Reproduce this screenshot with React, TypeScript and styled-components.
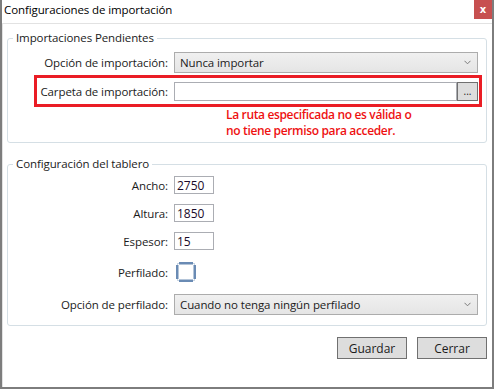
import React from 'react';
import styled, { createGlobalStyle } from 'styled-components';

const GlobalStyle = createGlobalStyle`
  html, body {
    margin: 0;
    padding: 0;
    background: #ffffff;
  }
  body {
    font-family: "Open Sans", "Noto Sans", sans-serif;
    font-size: 11.5px;
    letter-spacing: -0.1px;
    color: #1b1b1b;
  }
`;

const Window = styled.div`
  width: 494px;
  height: 389px;
  box-sizing: border-box;
  border: 2px solid #7d7d7d;
  border-top: none;
  display: flex;
  flex-direction: column;
  background: #ffffff;
`;

const TitleBar = styled.div`
  height: 23px;
  display: flex;
  justify-content: space-between;
  align-items: flex-start;
  padding-left: 2px;
`;

const Title = styled.span`
  line-height: 20px;
  color: #000000;
`;

const CloseButton = styled.div`
  width: 18px;
  height: 19px;
  background: #c75050;
  color: #ffffff;
  display: flex;
  align-items: center;
  justify-content: center;
  font: bold 10px "DejaVu Sans", sans-serif;
`;

const Content = styled.div`
  flex: 1;
  border-top: 1px solid #e2e2e2;
  border-left: 1px solid #e2e2e2;
  padding: 6px 5px 0 4px;
  display: flex;
  flex-direction: column;
`;

const GroupBox = styled.fieldset<{ $top: number; $padTop: number; $padBottom: number }>`
  margin: ${(p) => p.$top}px 0 0;
  padding: ${(p) => p.$padTop}px 8px ${(p) => p.$padBottom}px 0;
  border: 1px solid #d5dfe5;
  border-radius: 3px;
  min-width: 0;
`;

const Legend = styled.legend`
  margin-left: 5px;
  padding: 0 3px;
  line-height: 16px;
  color: #1b1b1b;
`;

const FormRow = styled.div<{ $labelWidth?: number; $top?: number }>`
  display: grid;
  grid-template-columns: ${(p) => p.$labelWidth ?? 160}px 1fr;
  column-gap: 6px;
  align-items: center;
  margin-top: ${(p) => p.$top ?? 0}px;
`;

const Label = styled.label`
  text-align: right;
  white-space: nowrap;
  color: #1b1b1b;
`;

const Highlight = styled.div`
  margin: 2px -4px 0 26px;
  border: 3px solid #ea1d25;
  padding: 4px 1px 3px 0;
`;

const SelectBox = styled.div`
  height: 21px;
  box-sizing: border-box;
  border: 1px solid #acacac;
  background: linear-gradient(#f0f0f0, #e5e5e5);
  display: flex;
  align-items: center;
  justify-content: space-between;
  padding: 0 6px 0 5px;
  color: #1b1b1b;
`;

const PathField = styled.div`
  display: flex;
  height: 19px;
`;

const TextBox = styled.input<{ $width?: number }>`
  box-sizing: border-box;
  width: ${(p) => (p.$width ? `${p.$width}px` : 'auto')};
  flex: ${(p) => (p.$width ? 'none' : '1')};
  min-width: 0;
  height: ${(p) => (p.$width ? 18 : 19)}px;
  border: 1px solid #abadb3;
  padding: 0 2px;
  margin: 0;
  font: inherit;
  font-size: 12px;
  color: #1a0a2a;
  background: #ffffff;
  outline: none;
`;

const BrowseButton = styled.button`
  width: 21px;
  height: 19px;
  box-sizing: border-box;
  border: 1px solid #707070;
  background: #dddddd;
  padding: 0 0 4px;
  margin: 0;
  font: inherit;
  font-size: 10px;
  line-height: 10px;
  color: #1b1b1b;
  display: flex;
  align-items: flex-end;
  justify-content: center;
`;

const ErrorText = styled.div`
  grid-column: 2;
  margin-left: 52px;
  font-size: 12px;
  line-height: 16px;
  letter-spacing: -0.35px;
  color: #ee1111;
  font-weight: 600;
`;

const CheckMark = styled.svg`
  display: block;
  margin-left: 2px;
`;

const ButtonBar = styled.div`
  display: flex;
  justify-content: flex-end;
  gap: 10px;
  margin: 11px 0 0;
`;

const DialogButton = styled.button`
  width: 70px;
  height: 22px;
  box-sizing: border-box;
  border: 1px solid #707070;
  background: #dddddd;
  font: inherit;
  font-size: 12px;
  color: #1b1b1b;
  padding: 0;
`;

function Chevron(): JSX.Element {
  return (
    <svg width="7" height="5" viewBox="0 0 7 5">
      <path d="M0.5 0.8 L3.5 3.8 L6.5 0.8" fill="none" stroke="#7a7a7a" strokeWidth="1" />
    </svg>
  );
}

function ComboBox({ text }: { text: string }): JSX.Element {
  return (
    <SelectBox>
      <span>{text}</span>
      <Chevron />
    </SelectBox>
  );
}

function Checkbox(): JSX.Element {
  return (
    <CheckMark width="20" height="20" viewBox="0 0 20 20">
      <rect x="1.5" y="1.5" width="17" height="17" fill="#ffffff" stroke="#c9d6e4" strokeWidth="1" />
      <rect x="3" y="0" width="14" height="2.5" fill="#6a8bb4" />
      <rect x="3" y="17.5" width="14" height="2.5" fill="#6a8bb4" />
      <rect x="0" y="3" width="2.5" height="14" fill="#6a8bb4" />
      <rect x="17.5" y="3" width="2.5" height="14" fill="#6a8bb4" />
    </CheckMark>
  );
}

export default function App(): JSX.Element {
  return (
    <>
      <GlobalStyle />
      <Window>
        <TitleBar>
          <Title>Configuraciones de importación</Title>
          <CloseButton>x</CloseButton>
        </TitleBar>
        <Content>
          <GroupBox $top={0} $padTop={6} $padBottom={3}>
            <Legend>Importaciones Pendientes</Legend>
            <FormRow>
              <Label>Opción de importación:</Label>
              <ComboBox text="Nunca importar" />
            </FormRow>
            <Highlight>
              <FormRow $labelWidth={131}>
                <Label>Carpeta de importación:</Label>
                <PathField>
                  <TextBox defaultValue="" />
                  <BrowseButton>...</BrowseButton>
                </PathField>
              </FormRow>
            </Highlight>
            <FormRow>
              <span />
              <ErrorText>
                La ruta especificada no es válida o
                <br />
                no tiene permiso para acceder.
              </ErrorText>
            </FormRow>
          </GroupBox>
          <GroupBox $top={13} $padTop={4} $padBottom={10}>
            <Legend>Configuración del tablero</Legend>
            <FormRow>
              <Label>Ancho:</Label>
              <TextBox $width={40} defaultValue="2750" />
            </FormRow>
            <FormRow $top={10}>
              <Label>Altura:</Label>
              <TextBox $width={40} defaultValue="1850" />
            </FormRow>
            <FormRow $top={10}>
              <Label>Espesor:</Label>
              <TextBox $width={40} defaultValue="15" />
            </FormRow>
            <FormRow $top={12}>
              <Label>Perfilado:</Label>
              <Checkbox />
            </FormRow>
            <FormRow $top={12}>
              <Label>Opción de perfilado:</Label>
              <ComboBox text="Cuando no tenga ningún perfilado" />
            </FormRow>
          </GroupBox>
          <ButtonBar>
            <DialogButton>Guardar</DialogButton>
            <DialogButton>Cerrar</DialogButton>
          </ButtonBar>
        </Content>
      </Window>
    </>
  );
}
